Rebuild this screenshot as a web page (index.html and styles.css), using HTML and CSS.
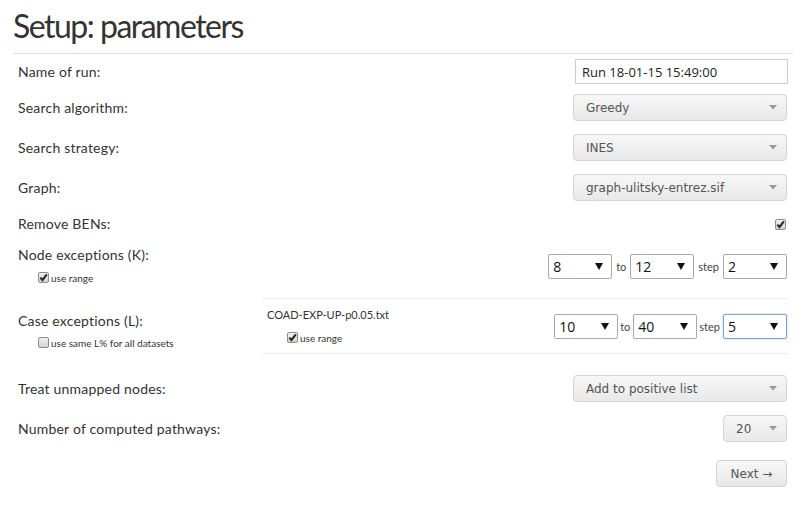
FILE: index.html
```html
<!DOCTYPE html>
<html>
<head>
<meta charset="utf-8">
<link rel="stylesheet" href="styles.css">
</head>
<body>
<div class="page">
  <h1 class="title">Setup: parameters</h1>
  <div class="form">
    <div class="row row-name">
      <span class="label">Name of run:</span>
      <input class="text-input" type="text" value="Run 18-01-15 15:49:00">
    </div>
    <div class="row">
      <span class="label">Search algorithm:</span>
      <div class="select wide"><span>Greedy</span><svg class="caret" width="8" height="5" viewBox="0 0 8 5"><path d="M0 0H8L4 4.5Z"/></svg></div>
    </div>
    <div class="row">
      <span class="label">Search strategy:</span>
      <div class="select wide"><span>INES</span><svg class="caret" width="8" height="5" viewBox="0 0 8 5"><path d="M0 0H8L4 4.5Z"/></svg></div>
    </div>
    <div class="row">
      <span class="label">Graph:</span>
      <div class="select wide"><span>graph-ulitsky-entrez.sif</span><svg class="caret" width="8" height="5" viewBox="0 0 8 5"><path d="M0 0H8L4 4.5Z"/></svg></div>
    </div>
    <div class="row row-ben">
      <span class="label">Remove BENs:</span>
      <span class="check ben-check"><svg width="9" height="9" viewBox="0 0 9 9"><path d="M1.3 4.6L3.5 7L7.8 1.4"/></svg></span>
    </div>
    <div class="row row-node">
      <div class="labelcol">
        <span class="label">Node exceptions (K):</span>
        <div class="subopt"><span class="check"><svg width="9" height="9" viewBox="0 0 9 9"><path d="M1.3 4.6L3.5 7L7.8 1.4"/></svg></span><span class="small">use range</span></div>
      </div>
      <div class="range node-range">
        <div class="nsel"><span>8</span><svg width="8" height="7" viewBox="0 0 8 7"><path d="M0 0H8L4 7Z"/></svg></div>
        <span class="rtext">to</span>
        <div class="nsel"><span>12</span><svg width="8" height="7" viewBox="0 0 8 7"><path d="M0 0H8L4 7Z"/></svg></div>
        <span class="rtext">step</span>
        <div class="nsel"><span>2</span><svg width="8" height="7" viewBox="0 0 8 7"><path d="M0 0H8L4 7Z"/></svg></div>
      </div>
    </div>
    <div class="row row-case">
      <div class="labelcol case-label">
        <span class="label">Case exceptions (L):</span>
        <div class="subopt"><span class="check off"></span><span class="small">use same L% for all datasets</span></div>
      </div>
      <div class="datasets">
        <div class="dataset">
          <span class="dsname">COAD-EXP-UP-p0.05.txt</span>
          <div class="subopt ds-opt"><span class="check"><svg width="9" height="9" viewBox="0 0 9 9"><path d="M1.3 4.6L3.5 7L7.8 1.4"/></svg></span><span class="small">use range</span></div>
        </div>
        <div class="range case-range">
          <div class="nsel"><span>10</span><svg width="8" height="7" viewBox="0 0 8 7"><path d="M0 0H8L4 7Z"/></svg></div>
          <span class="rtext">to</span>
          <div class="nsel"><span>40</span><svg width="8" height="7" viewBox="0 0 8 7"><path d="M0 0H8L4 7Z"/></svg></div>
          <span class="rtext">step</span>
          <div class="nsel focus"><span>5</span><svg width="8" height="7" viewBox="0 0 8 7"><path d="M0 0H8L4 7Z"/></svg></div>
        </div>
      </div>
    </div>
    <div class="row">
      <span class="label">Treat unmapped nodes:</span>
      <div class="select wide"><span>Add to positive list</span><svg class="caret" width="8" height="5" viewBox="0 0 8 5"><path d="M0 0H8L4 4.5Z"/></svg></div>
    </div>
    <div class="row row-num">
      <span class="label">Number of computed pathways:</span>
      <div class="select short"><span>20</span><svg class="caret" width="8" height="5" viewBox="0 0 8 5"><path d="M0 0H8L4 4.5Z"/></svg></div>
    </div>
    <div class="row row-next">
      <button class="btn" type="button">Next →</button>
    </div>
  </div>
</div>
</body>
</html>
```

FILE: styles.css
```css
* { box-sizing: border-box; }
body {
  margin: 0;
  background: #fff;
  color: #333;
  font-family: Lato, "Liberation Sans", sans-serif;
}
.page { padding: 0 14px 0 13px; }
.title {
  margin: 0;
  padding: 8px 0 9px;
  font-size: 32px;
  line-height: 36px;
  font-weight: normal;
  color: #333;
  letter-spacing: -1.5px;
  border-bottom: 1px solid #ddd;
}
.form { padding: 4px 5px 0; }
.row {
  display: flex;
  align-items: center;
  justify-content: space-between;
  height: 27px;
  margin-bottom: 13px;
}
.label { font-size: 14px; line-height: 18px; color: #333; letter-spacing: 0.2px; }
.row-name { margin-bottom: 9px; }
.text-input {
  width: 213px;
  height: 25px;
  border: 1px solid #ccc;
  padding: 0 6px;
  font-family: "Open Sans", sans-serif;
  font-size: 13px;
  color: #222;
  background: #fff;
  outline: none;
}
.select {
  height: 27px;
  display: flex;
  align-items: center;
  justify-content: space-between;
  border: 1px solid #d4d4d4;
  border-radius: 4px;
  background: linear-gradient(#f7f7f7, #e8e8e8);
  font-family: "DejaVu Sans", sans-serif;
  font-size: 12px;
  color: #555;
  margin-right: 1px;
}
.select.wide { width: 214px; padding: 0 9px 0 12px; }
.select.short { width: 64px; padding: 0 9px 0 12px; }
.caret { fill: #999; }
.row-ben { height: 20px; margin-bottom: 12px; }
.check {
  width: 11px;
  height: 11px;
  border: 1px solid #8d8d8d;
  border-radius: 2px;
  background: linear-gradient(#f0f0f0, #d3d3d3);
  display: inline-flex;
  align-items: center;
  justify-content: center;
  flex: none;
}
.check svg path { fill: none; stroke: #2a2a2a; stroke-width: 2.1; }
.ben-check { margin-right: 2px; }
.labelcol { display: flex; flex-direction: column; }
.subopt {
  display: flex;
  align-items: center;
  margin-left: 20px;
  height: 13px;
}
.small { font-size: 10px; color: #333; margin-left: 2px; }
.row-node { height: 38px; align-items: flex-start; margin-bottom: 14px; }
.row-node .subopt { margin-top: 7px; }
.range { display: flex; align-items: center; gap: 3px; }
.node-range { margin-top: 8px; margin-right: 1px; }
.rtext { font-size: 11px; color: #444; padding: 0 1px; }
.case-range { gap: 2px; }
.case-range .rtext { padding: 0 1px 0 0; }
.nsel {
  width: 64px;
  height: 25px;
  border: 1px solid #a9a9a9;
  border-radius: 2px;
  background: #fff;
  display: flex;
  align-items: center;
  justify-content: space-between;
  padding: 0 8px 0 4px;
  font-family: "Open Sans", sans-serif;
  font-size: 14px;
  color: #111;
}
.nsel svg path { fill: #111; }
.nsel.focus { border-color: #7aa1dc; box-shadow: 0 0 2px #a9c6ef; }
.row-case { height: 56px; align-items: flex-start; margin-bottom: 21px; }
.case-label { width: 244px; padding-top: 14px; }
.case-label .subopt { margin-top: 6px; }
.datasets {
  flex: 1;
  height: 56px;
  border-top: 1px solid #eee;
  border-bottom: 1px solid #eee;
  display: flex;
  justify-content: space-between;
  align-items: flex-start;
  padding-left: 5px;
}
.dataset { display: flex; flex-direction: column; padding-top: 9px; }
.dsname { font-size: 11px; line-height: 14px; color: #333; }
.ds-opt { margin-top: 9px; }
.case-range { margin-top: 15px; margin-right: 1px; }
.row-num { margin-bottom: 18px; }
.row-next { justify-content: flex-end; }
.btn {
  width: 71px;
  height: 27px;
  margin-right: 1px;
  border: 1px solid #d4d4d4;
  border-radius: 4px;
  background: linear-gradient(#f7f7f7, #e8e8e8);
  font-family: "DejaVu Sans", sans-serif;
  font-size: 12px;
  color: #555;
  padding: 0;
}
```
